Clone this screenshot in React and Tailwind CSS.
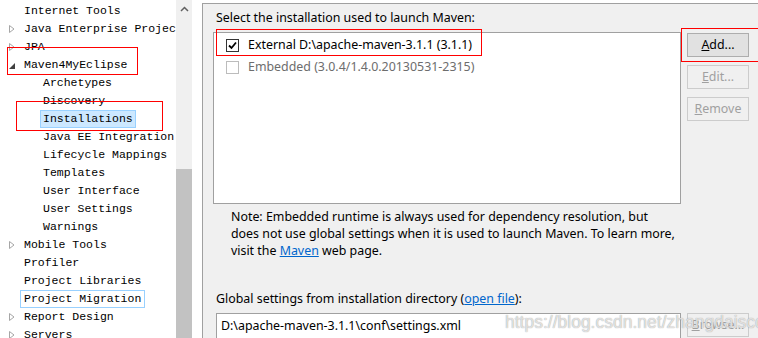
import React from 'react';

const tree = [
  { label: 'Internet Tools', level: 1 },
  { label: 'Java Enterprise Project', level: 1, arrow: 'closed' },
  { label: 'JPA', level: 1, arrow: 'closed' },
  { label: 'Maven4MyEclipse', level: 1, arrow: 'open' },
  { label: 'Archetypes', level: 2 },
  { label: 'Discovery', level: 2 },
  { label: 'Installations', level: 2, selected: true },
  { label: 'Java EE Integration', level: 2 },
  { label: 'Lifecycle Mappings', level: 2 },
  { label: 'Templates', level: 2 },
  { label: 'User Interface', level: 2 },
  { label: 'User Settings', level: 2 },
  { label: 'Warnings', level: 2 },
  { label: 'Mobile Tools', level: 1, arrow: 'closed' },
  { label: 'Profiler', level: 1 },
  { label: 'Project Libraries', level: 1 },
  { label: 'Project Migration', level: 1, focused: true },
  { label: 'Report Design', level: 1, arrow: 'closed' },
  { label: 'Servers', level: 1, arrow: 'closed' },
];

function Arrow({ kind }) {
  if (kind === 'closed') {
    return (
      <svg width="8" height="10" viewBox="0 0 8 10" className="absolute left-[8px] top-[4px]">
        <path d="M1.5 1.5 L6 5 L1.5 8.5 Z" fill="none" stroke="#a6a6a6" strokeWidth="1" />
      </svg>
    );
  }
  return (
    <svg width="8" height="8" viewBox="0 0 8 8" className="absolute left-[8px] top-[6px]">
      <path d="M7 1 L7 7 L1 7 Z" fill="#404040" />
    </svg>
  );
}

function TreeRow({ item }) {
  const left = item.level === 1 ? 'pl-[24px]' : 'pl-[43px]';
  return (
    <div className={`relative h-[18px] ${left} whitespace-nowrap`}>
      {item.arrow && <Arrow kind={item.arrow} />}
      <span
        className={
          item.selected
            ? '-ml-[3px] inline-block h-[18px] border border-[#99d1ff] bg-[#cce8ff] px-[2px] leading-[16px]'
            : item.focused
            ? '-ml-[4px] inline-block h-[18px] border border-[#99d1ff] px-[3px] leading-[16px]'
            : 'inline-block leading-[18px]'
        }
      >
        {item.label}
      </span>
    </div>
  );
}

function Button({ children, disabled }) {
  return (
    <div
      className={
        disabled
          ? 'flex h-[24px] w-[62px] items-center justify-center border border-[#cccccc] bg-[#f0f0f0] text-[#a0a0a0]'
          : 'flex h-[24px] w-[62px] items-center justify-center border border-[#adadad] bg-[#e1e1e1] text-black'
      }
    >
      {children}
    </div>
  );
}

function CheckBox({ checked }) {
  return checked ? (
    <div className="flex h-[13px] w-[13px] items-center justify-center border border-[#333333] bg-white">
      <svg width="9" height="9" viewBox="0 0 9 9">
        <path d="M1 4.5 L3.5 7 L8 1.5" fill="none" stroke="#000" strokeWidth="1.8" />
      </svg>
    </div>
  ) : (
    <div className="h-[13px] w-[13px] border border-[#bcbcbc] bg-white" />
  );
}

export default function App() {
  return (
    <div className="relative flex h-[338px] w-[758px] overflow-hidden bg-white text-black">
      {/* preference tree */}
      <div className="w-[176px] shrink-0 overflow-hidden pt-[2px] font-['Liberation_Mono',monospace] text-[11.5px] text-black">
        {tree.map((item) => (
          <TreeRow key={item.label} item={item} />
        ))}
      </div>

      {/* scrollbar */}
      <div className="flex w-[16px] shrink-0 flex-col bg-[#f0f0f0]">
        <div className="flex h-[17px] items-center justify-center">
          <svg width="9" height="6" viewBox="0 0 9 6">
            <path d="M1 5 L4.5 1.5 L8 5" fill="none" stroke="#606060" strokeWidth="1.5" />
          </svg>
        </div>
        <div className="h-[152px]" />
        <div className="flex-1 bg-[#c2c2c2]" />
      </div>

      <div className="w-[10px] shrink-0" />

      {/* maven installations page */}
      <div className="mt-[3px] flex-1 border-l border-t border-[#a0a0a0] bg-[#f0f0f0] font-['Noto_Sans',sans-serif] text-[12.4px]">
        <div className="pl-[13px] pt-[6px] leading-[16px]">Select the installation used to launch Maven:</div>
        <div className="mt-[6px] flex pl-[10px]">
          <div className="h-[172px] w-[468px] border border-[#a0a0a0] bg-white pt-[5px]">
            <div className="flex h-[15px] items-center gap-[9px] pl-[12px]">
              <CheckBox checked />
              <span>External D:\apache-maven-3.1.1 (3.1.1)</span>
            </div>
            <div className="mt-[7px] flex h-[15px] items-center gap-[9px] pl-[12px] text-[#6d6d6d]">
              <CheckBox />
              <span>Embedded (3.0.4/1.4.0.20130531-2315)</span>
            </div>
          </div>
          <div className="ml-[6px] flex flex-col gap-[8px] pt-[1px]">
            <Button>
              <span><span className="underline">A</span>dd...</span>
            </Button>
            <Button disabled>
              <span><span className="underline">E</span>dit...</span>
            </Button>
            <Button disabled>
              <span><span className="underline">R</span>emove</span>
            </Button>
          </div>
        </div>
        <div className="mt-[4px] pl-[28px] leading-[17px]">
          Note: Embedded runtime is always used for dependency resolution, but
          <br />
          does not use global settings when it is used to launch Maven. To learn more,
          <br />
          visit the <span className="text-[#0066cc] underline">Maven</span> web page.
        </div>
        <div className="mt-[31px] pl-[13px] leading-[17px]">
          Global settings from installation directory (<span className="text-[#0066cc] underline">open file</span>):
        </div>
        <div className="mt-[6px] flex pl-[13px]">
          <div className="flex h-[26px] w-[465px] items-center border border-[#a0a0a0] bg-white pl-[4px]">
            D:\apache-maven-3.1.1\conf\settings.xml
          </div>
          <div className="ml-[6px]">
            <Button disabled>
              <span><span className="underline">B</span>rowse...</span>
            </Button>
          </div>
        </div>
      </div>

      {/* annotation boxes */}
      <div className="pointer-events-none absolute left-[7px] top-[47px] h-[28px] w-[131px] border border-[#ff0000]" />
      <div className="pointer-events-none absolute left-[16px] top-[101px] h-[30px] w-[147px] border border-[#ff0000]" />
      <div className="pointer-events-none absolute left-[216px] top-[29px] h-[27px] w-[266px] border border-[#ff0000]" />
      <div className="pointer-events-none absolute left-[681px] top-[28px] h-[34px] w-[78px] border border-[#ff0000]" />

      {/* watermark */}
      <div className="pointer-events-none absolute left-[505px] top-[309px] whitespace-nowrap font-['Liberation_Sans',sans-serif] text-[17.5px] text-[rgba(255,255,255,0.7)] [text-shadow:0_0_1px_#8a8a8a]">
        https://blog.csdn.net/zhangdaiscott
      </div>
    </div>
  );
}
